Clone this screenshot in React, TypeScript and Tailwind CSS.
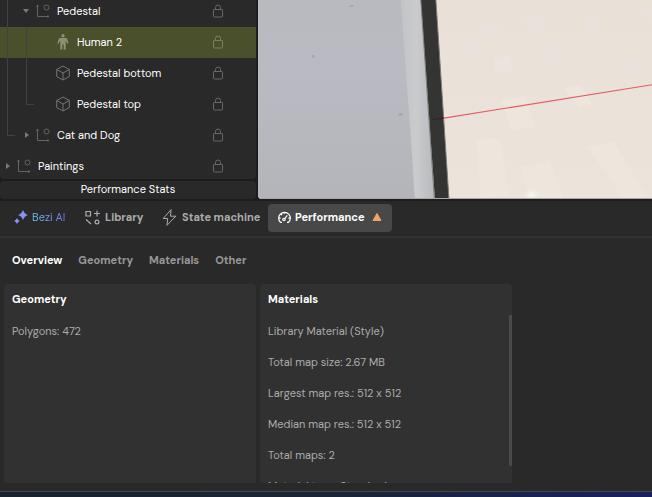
import type { ReactNode } from "react";

type NodeKind = "group" | "human" | "mesh";

interface TreeNode {
  name: string;
  kind: NodeKind;
  guides: ("line" | "end")[];
  caret?: "open" | "closed";
  selected?: boolean;
}

const nodes: TreeNode[] = [
  { name: "Pedestal", kind: "group", guides: ["line"], caret: "open" },
  { name: "Human 2", kind: "human", guides: ["line", "line"], selected: true },
  { name: "Pedestal bottom", kind: "mesh", guides: ["line", "line"] },
  { name: "Pedestal top", kind: "mesh", guides: ["line", "end"] },
  { name: "Cat and Dog", kind: "group", guides: ["end"], caret: "closed" },
  { name: "Paintings", kind: "group", guides: [], caret: "closed" },
];

function GroupIcon() {
  return (
    <svg viewBox="0 0 14 14" className="size-[14px] shrink-0 text-[#646464]" fill="none" stroke="currentColor">
      <path d="M1.500 1v11.500H13M.5 2.500l1-1.500 1 1.500M11.500 11.500l1.500 1-1.500 1" />
      <circle cx="10.500" cy="3.500" r="2.500" />
    </svg>
  );
}

function HumanIcon() {
  return (
    <svg viewBox="0 0 14 16" className="h-[16px] w-[14px] shrink-0 text-[#8c9175]" fill="currentColor">
      <circle cx="7" cy="1.700" r="1.700" />
      <path d="M4.500 4h5c1 0 1.600.5 1.900 1.400l1.200 3.800-1.100.5L9.700 6.500V15.500H7.700V10.500H6.300V15.500H4.300V6.500L2.500 9.700l-1.100-.5 1.200-3.800C2.900 4.500 3.500 4 4.500 4Z" />
    </svg>
  );
}

function MeshIcon() {
  return (
    <svg viewBox="0 0 14 16" className="h-[16px] w-[14px] shrink-0 text-[#757575]" fill="none" stroke="currentColor" strokeLinejoin="round">
      <path d="M7 1l6.300 3.500v7L7 15 .7 11.500v-7ZM.7 4.500L7 8l6.300-3.500M7 8v7" />
    </svg>
  );
}

function LockIcon() {
  return (
    <svg viewBox="0 0 12 14" className="h-[14px] w-[12px]" fill="none" stroke="currentColor" strokeLinejoin="round">
      <rect x="1.500" y="5.500" width="9" height="7.500" rx=".6" />
      <path d="M3.500 5.500V3.500a2.500 2.500 0 0 1 5 0V5.500" />
    </svg>
  );
}

function TreeRow({ node }: { node: TreeNode }) {
  return (
    <li className={`flex h-[31px] ${node.selected ? "bg-[#4a502c]" : ""}`}>
      {node.guides.map((guide, i) => (
        <span key={i} className="flex w-[19px] shrink-0 flex-col pl-[7px]">
          <span className={`h-1/2 border-l border-[#414141] ${guide === "end" ? "w-[8px] border-b" : ""}`} />
          <span className={`h-1/2 ${guide === "line" ? "border-l border-[#414141]" : ""}`} />
        </span>
      ))}
      <div className="flex min-w-0 flex-1 items-center pb-[2px]">
        {node.caret ? (
          <button aria-label={`Toggle ${node.name}`} className="flex w-[17px] shrink-0 items-center pl-[4px] text-[#7a7a7a]">
            <svg viewBox="0 0 6 6" className="size-[6px]" fill="currentColor">
              {node.caret === "open" ? <path d="M0 1h6L3 5Z" /> : <path d="M2 0l4 3-4 3Z" />}
            </svg>
          </button>
        ) : (
          <span className="w-[18px] shrink-0" />
        )}
        {node.kind === "group" && <GroupIcon />}
        {node.kind === "human" && <HumanIcon />}
        {node.kind === "mesh" && <MeshIcon />}
        <span className="ml-[7px] flex-1 truncate text-white">{node.name}</span>
        <button aria-label={`Lock ${node.name}`} className={`mr-[32px] ${node.selected ? "text-[#7b8062]" : "text-[#686868]"}`}>
          <LockIcon />
        </button>
      </div>
    </li>
  );
}

function Scene() {
  return (
    <svg viewBox="0 0 394 198" preserveAspectRatio="xMinYMin slice" className="block h-full w-full" role="img" aria-label="Scene viewport">
      <defs>
        <linearGradient id="wall" x1="0" y1="0" x2="0" y2="1">
          <stop offset="0" stopColor="#b9bac0" />
          <stop offset=".35" stopColor="#babac2" />
          <stop offset="1" stopColor="#b4b5bb" />
        </linearGradient>
        <linearGradient id="edge" x1="0" y1="0" x2="1" y2="0">
          <stop offset="0" stopColor="#c2c3c6" />
          <stop offset=".45" stopColor="#cacbcd" />
          <stop offset="1" stopColor="#b6b8bc" />
        </linearGradient>
        <linearGradient id="floor" x1="0" y1="0" x2="0" y2="1">
          <stop offset="0" stopColor="#e9e0d7" />
          <stop offset="1" stopColor="#ece4da" />
        </linearGradient>
        <radialGradient id="glow">
          <stop offset="0" stopColor="#f8f6f0" />
          <stop offset="1" stopColor="#f0e9e0" stopOpacity="0" />
        </radialGradient>
      </defs>
      <rect width="394" height="198" fill="url(#floor)" />
      <g fill="#f0e8e0" opacity=".6">
        <path d="M328 146l26-5 33 55-23 2ZM242 100l24-4 10 30-24 4ZM262 166l28-5 14 37h-34ZM217 140l24-3 8 58-27 2ZM305 88l16-3 12 18-14 4ZM234 58l16-2 4 14-18 2Z" />
      </g>
      <g fill="#ebe1e0" opacity=".6">
        <path d="M218 26l20-4 4 14-20 3ZM232 56l20-3 4 18-22 2ZM275 44l22-3 8 22-18 3ZM262 16l18-2 4 14-14 2ZM205 44l14-2 3 16-12 1ZM378 8l16 4v10l-12-4ZM320 14l18 2 6 12-16 1ZM360 58l16-2 10 14-14 2Z" />
      </g>
      <ellipse cx="272" cy="194" rx="10" ry="7" fill="url(#glow)" />
      <path d="M0 0H163l13 198H0Z" fill="url(#wall)" />
      <path d="M142 0h21l13 198h-20l-4-62Z" fill="url(#edge)" />
      <path d="M162 0h15l13 198h-14Z" fill="#343432" />
      <path d="M161.500 0h1l13.500 198h-1ZM176.500 0h1l13 198h-1Z" fill="#7d7d7b" />
      <path d="M174 119l11-1.500" stroke="#292422" />
      <g fill="#a6a7ad">
        <ellipse cx="93" cy="6" rx="2.500" ry="1" />
        <ellipse cx="55" cy="56" rx="1.500" ry="1.500" />
        <ellipse cx="142" cy="114" rx="2.500" ry="1.200" />
      </g>
      <path d="M185 117.500L394 84" stroke="#e35c61" strokeWidth="1.200" />
      <path d="M0 197.500H394" stroke="#a9a6a4" />
    </svg>
  );
}

function SparkleIcon() {
  return (
    <svg viewBox="0 0 14 14" className="size-[14px] shrink-0 text-[#8b8ff8]" fill="currentColor">
      <path d="M9 0c1.100 2.800 2.300 4.100 5 5-2.700.9-3.900 2.200-5 5-1.100-2.800-2.300-4.100-5-5 2.700-.9 3.900-2.200 5-5ZM3 8c.8 1.700 1.400 2.300 3 3-1.600.7-2.200 1.300-3 3-.8-1.700-1.400-2.300-3-3 1.600-.7 2.200-1.300 3-3Z" />
    </svg>
  );
}

function LibraryIcon() {
  return (
    <svg viewBox="0 0 15 15" className="size-[15px] shrink-0" fill="none" stroke="currentColor" strokeWidth="1.200">
      <path d="M1 1.500h4.500v4.500H1ZM9 3.500h6M12 .5v6M1 9.500l5 4.500" />
      <circle cx="12" cy="12" r="1.900" />
    </svg>
  );
}

function BoltIcon() {
  return (
    <svg viewBox="0 0 14 17" className="h-[17px] w-[15px] shrink-0" fill="none" stroke="currentColor" strokeLinejoin="round">
      <path d="M8.500.700L.700 9.500H5.200L4.500 16.300 13.300 7.200H8Z" />
    </svg>
  );
}

function GaugeIcon() {
  return (
    <svg viewBox="0 0 14 14" className="size-[13px] shrink-0" fill="none" stroke="currentColor" strokeWidth="1.300">
      <path d="M4.300 12.300H2.700A6.300 6.300 0 1 1 11.300 12.300H9.700M.8 7.700h2M11.200 7.700h2M3.200 3.200l1.200 1.200M7 1.200v1.800M7 8.500L10 4.800" />
      <circle cx="6.400" cy="9.200" r="1.300" />
    </svg>
  );
}

function ToolButton({ icon, className, children }: { icon: ReactNode; className: string; children: ReactNode }) {
  return (
    <button className={`flex h-[28px] shrink-0 items-center whitespace-nowrap rounded pb-[2px] text-left ${className}`}>
      {icon}
      {children}
    </button>
  );
}

const materialStats = [
  "Library Material (Style)",
  "Total map size: 2.67 MB",
  "Largest map res.: 512 x 512",
  "Median map res.: 512 x 512",
  "Total maps: 2",
  "Material type: Standard",
];

function Card({ title, lines, scrollbar }: { title: string; lines: string[]; scrollbar?: boolean }) {
  return (
    <section className="w-[252px] shrink-0 overflow-hidden rounded-t bg-[#313131]">
      <h2 className="flex h-[31px] items-center pb-[2px] pl-[8px] font-bold text-white">{title}</h2>
      <div className="flex h-[168px] items-start overflow-hidden">
        <ul className="flex-1 pl-[8px] text-[#acacac]">
          {lines.map((line) => (
            <li key={line} className="flex h-[31px] items-center">{line}</li>
          ))}
        </ul>
        {scrollbar && <div className="h-[151px] w-[3px] rounded-b-sm bg-[#4a4a4a]" />}
      </div>
    </section>
  );
}

export default function App() {
  return (
    <div className="flex h-screen flex-col overflow-hidden bg-[#1d1d1d] font-['DM_Sans',Roboto,sans-serif] text-[11px] leading-4 [font-variation-settings:'opsz'_14]">
      <div className="flex min-h-0 flex-1 gap-[2px]">
        <aside className="flex w-[256px] shrink-0 flex-col gap-[2px]">
          <div className="min-h-0 flex-1 overflow-hidden rounded-b bg-[#292929]">
            <ul className="-mt-1">
              {nodes.map((node) => (
                <TreeRow key={node.name} node={node} />
              ))}
            </ul>
          </div>
          <h2 className="flex h-[18px] items-center justify-center rounded bg-[#292929] pb-[2px] text-white">Performance Stats</h2>
        </aside>
        <main className="min-w-0 flex-1 overflow-hidden rounded-bl">
          <Scene />
        </main>
      </div>
      <div className="mt-[2px] bg-[#292929]">
        <nav className="flex h-[37px] border-b-2 border-[#323232] pl-1 pt-[3px] font-bold text-[#acacac]">
          <ToolButton className="w-[71px] gap-[4px] pl-[10px] font-normal" icon={<SparkleIcon />}>
            <span className="bg-linear-to-r from-[#6cc4ea] to-[#7479ee] bg-clip-text text-transparent">Bezi AI</span>
          </ToolButton>
          <ToolButton className="w-[77px] gap-[5px] pl-[10px]" icon={<LibraryIcon />}>Library</ToolButton>
          <ToolButton className="w-[116px] gap-[5px] pl-[10px]" icon={<BoltIcon />}>State machine</ToolButton>
          <ToolButton className="w-[124px] gap-[4px] bg-[#484848] pl-[10px] text-white" icon={<GaugeIcon />}>
            Performance
            <svg viewBox="0 0 10 8" className="ml-auto mr-[10px] h-[8px] w-[10px]" fill="#f2a36e">
              <path d="M5 .5l4 7H1Z" stroke="#f2a36e" strokeLinejoin="round" />
            </svg>
          </ToolButton>
        </nav>
        <div className="flex h-[46px] items-center gap-[16px] pb-[2px] pl-[12px] font-bold text-[#989898]">
          <button className="text-white">Overview</button>
          <button>Geometry</button>
          <button>Materials</button>
          <button>Other</button>
        </div>
        <div className="flex gap-[4px] pb-[8px] pl-[4px]">
          <Card title="Geometry" lines={["Polygons: 472"]} />
          <Card title="Materials" lines={materialStats} scrollbar />
        </div>
      </div>
      <footer className="h-[6px] shrink-0 border-t border-[#424950] bg-linear-to-r from-[#19222e] via-[#1a2436] to-[#17205c]" />
    </div>
  );
}
